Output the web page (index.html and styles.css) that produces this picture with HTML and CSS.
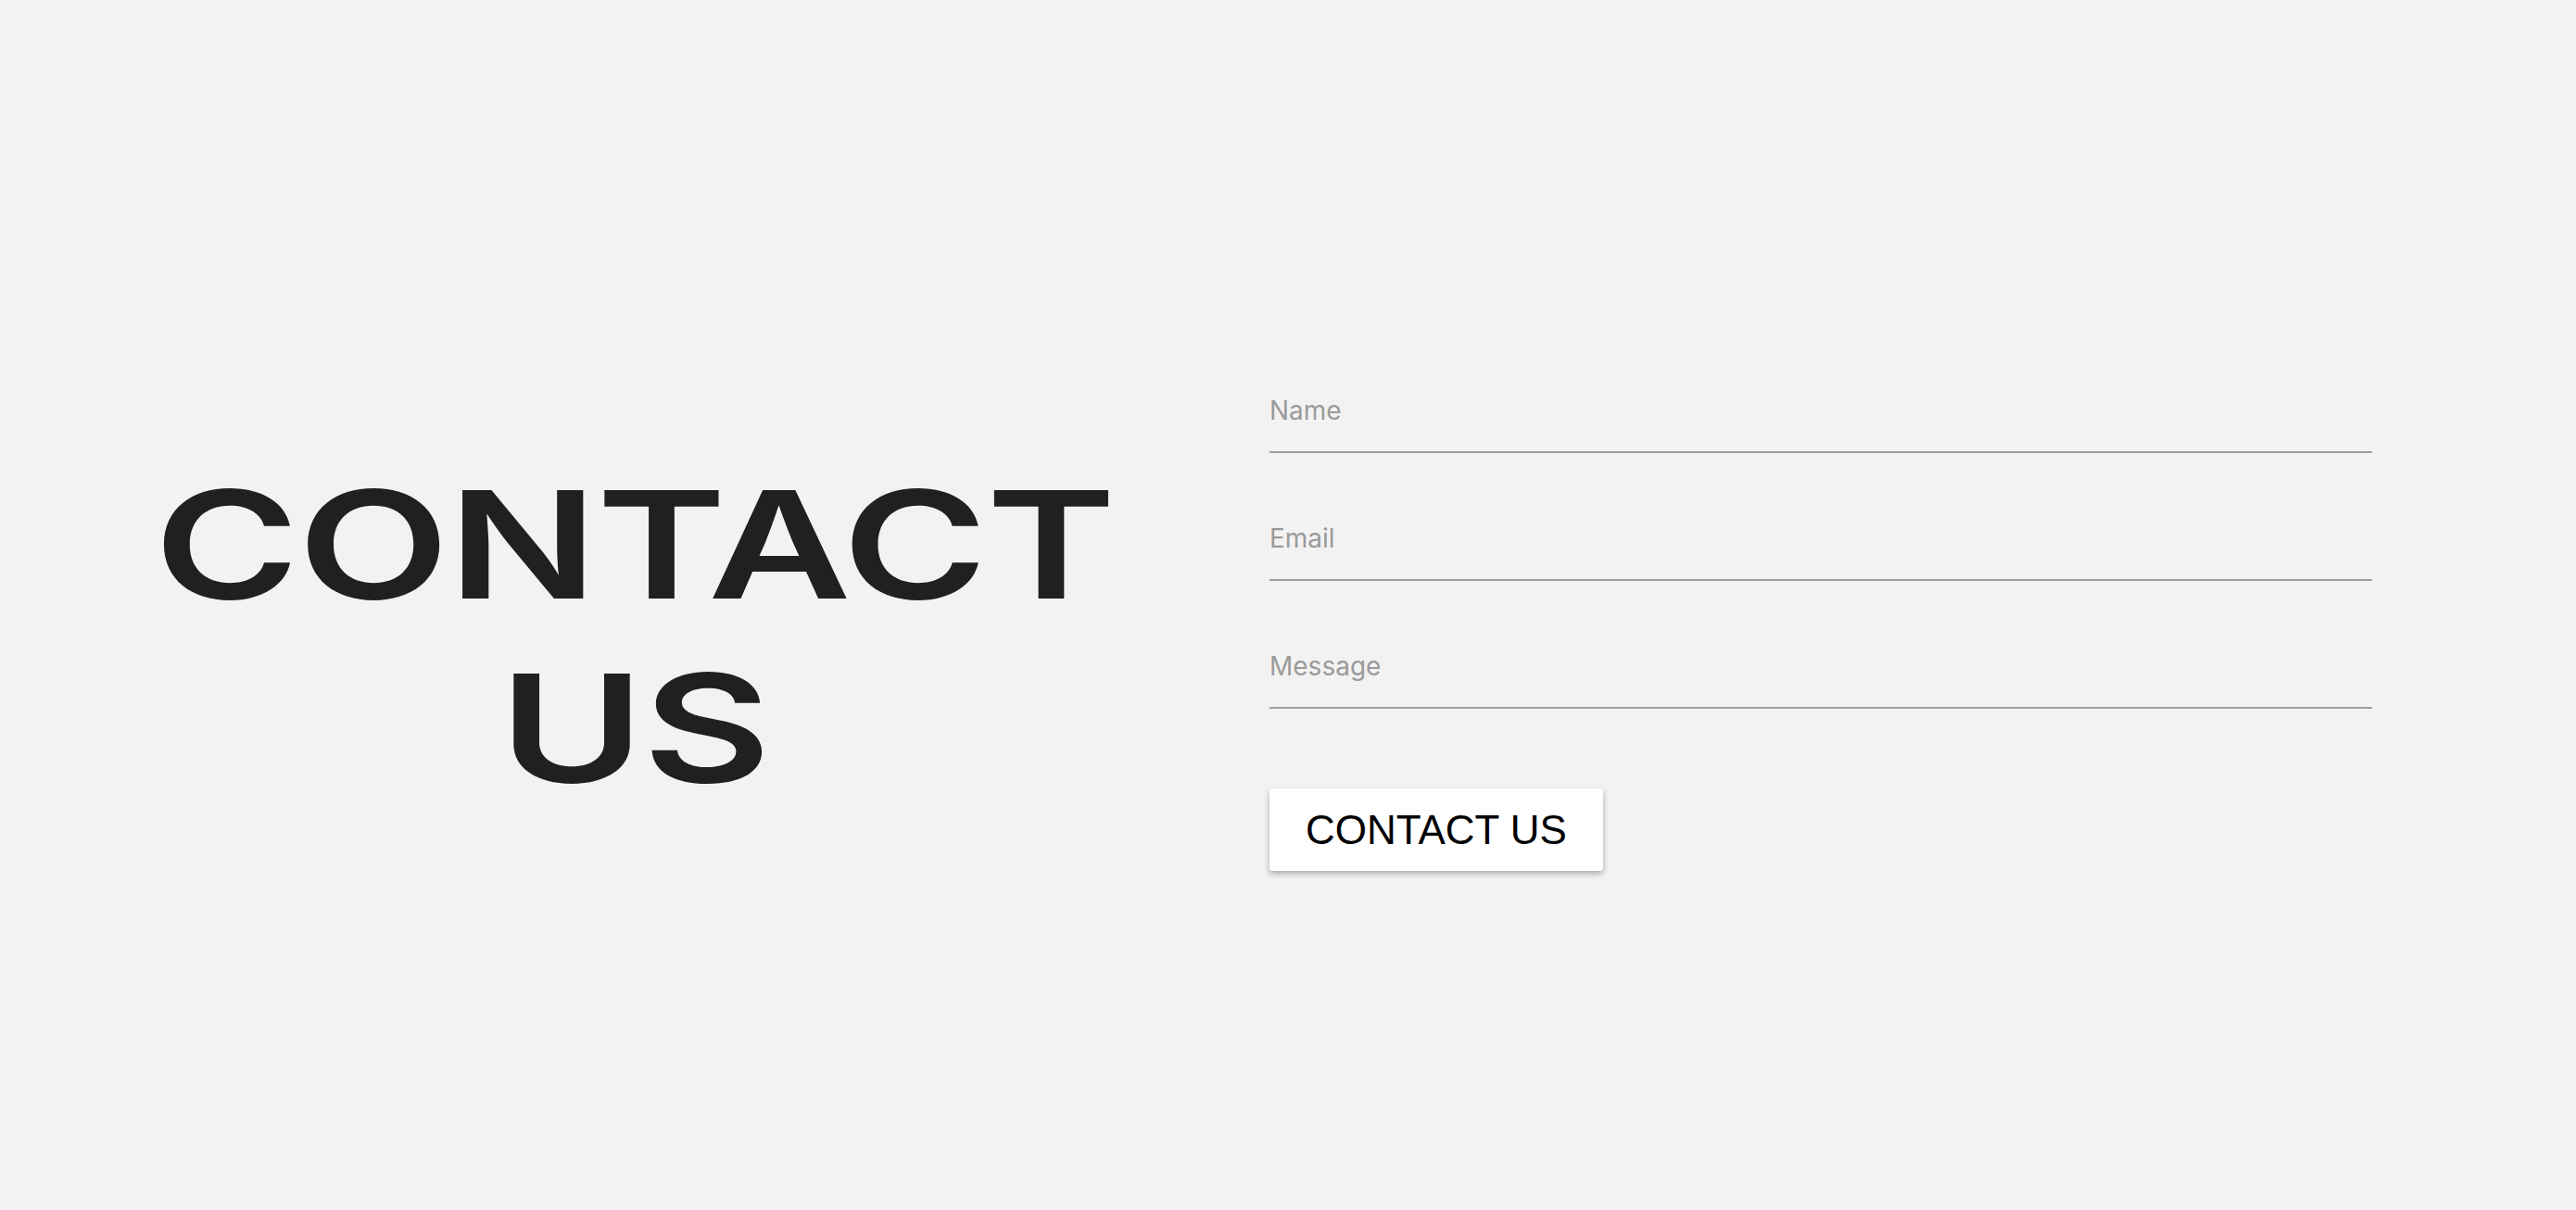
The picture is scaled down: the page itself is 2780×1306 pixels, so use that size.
FILE: index.html
```html
<!DOCTYPE html>
<html lang="en">
<head>
<meta charset="utf-8">
<title>Contact Us</title>
<link rel="stylesheet" href="styles.css">
</head>
<body>
<main class="page">
  <section class="intro">
    <h1 class="title">CONTACT<br>US</h1>
  </section>
  <form class="form">
    <label class="field"><span class="label">Name</span></label>
    <label class="field"><span class="label">Email</span></label>
    <label class="field"><span class="label">Message</span></label>
    <button type="button" class="submit">CONTACT US</button>
  </form>
</main>
</body>
</html>
```

FILE: styles.css
```css
html, body {
  margin: 0;
  padding: 0;
  background: #f2f2f2;
}

.page {
  display: flex;
  align-items: center;
  height: 1306px;
  box-sizing: border-box;
  padding-top: 58px;
}

.intro {
  width: 1370px;
  flex: none;
  display: flex;
  justify-content: center;
}

.title {
  margin: 10px 0 0 0;
  font-family: Inter, "Liberation Sans", sans-serif;
  font-weight: 600;
  font-size: 161px;
  line-height: 198px;
  color: #202020;
  text-align: center;
  letter-spacing: -1px;
  transform: scaleX(1.32);
  transform-origin: 50% 50%;
}

.form {
  width: 1190px;
  flex: none;
  display: flex;
  flex-direction: column;
  align-items: flex-start;
}

.field {
  display: block;
  width: 100%;
  padding-bottom: 26px;
  border-bottom: 2px solid #9e9e9e;
  margin-bottom: 74px;
}

.field:last-of-type {
  margin-bottom: 86px;
}

.label {
  display: block;
  font-family: Inter, "Noto Sans", sans-serif;
  font-size: 28px;
  line-height: 36px;
  color: #9a9a9a;
}

.submit {
  font-family: "Liberation Sans", Arial, sans-serif;
  font-size: 44px;
  line-height: 49px;
  color: #000;
  background: #fff;
  border: 0;
  border-radius: 3px;
  padding: 20px 39px;
  box-shadow: 0 3px 6px rgba(0, 0, 0, 0.3);
}
```
